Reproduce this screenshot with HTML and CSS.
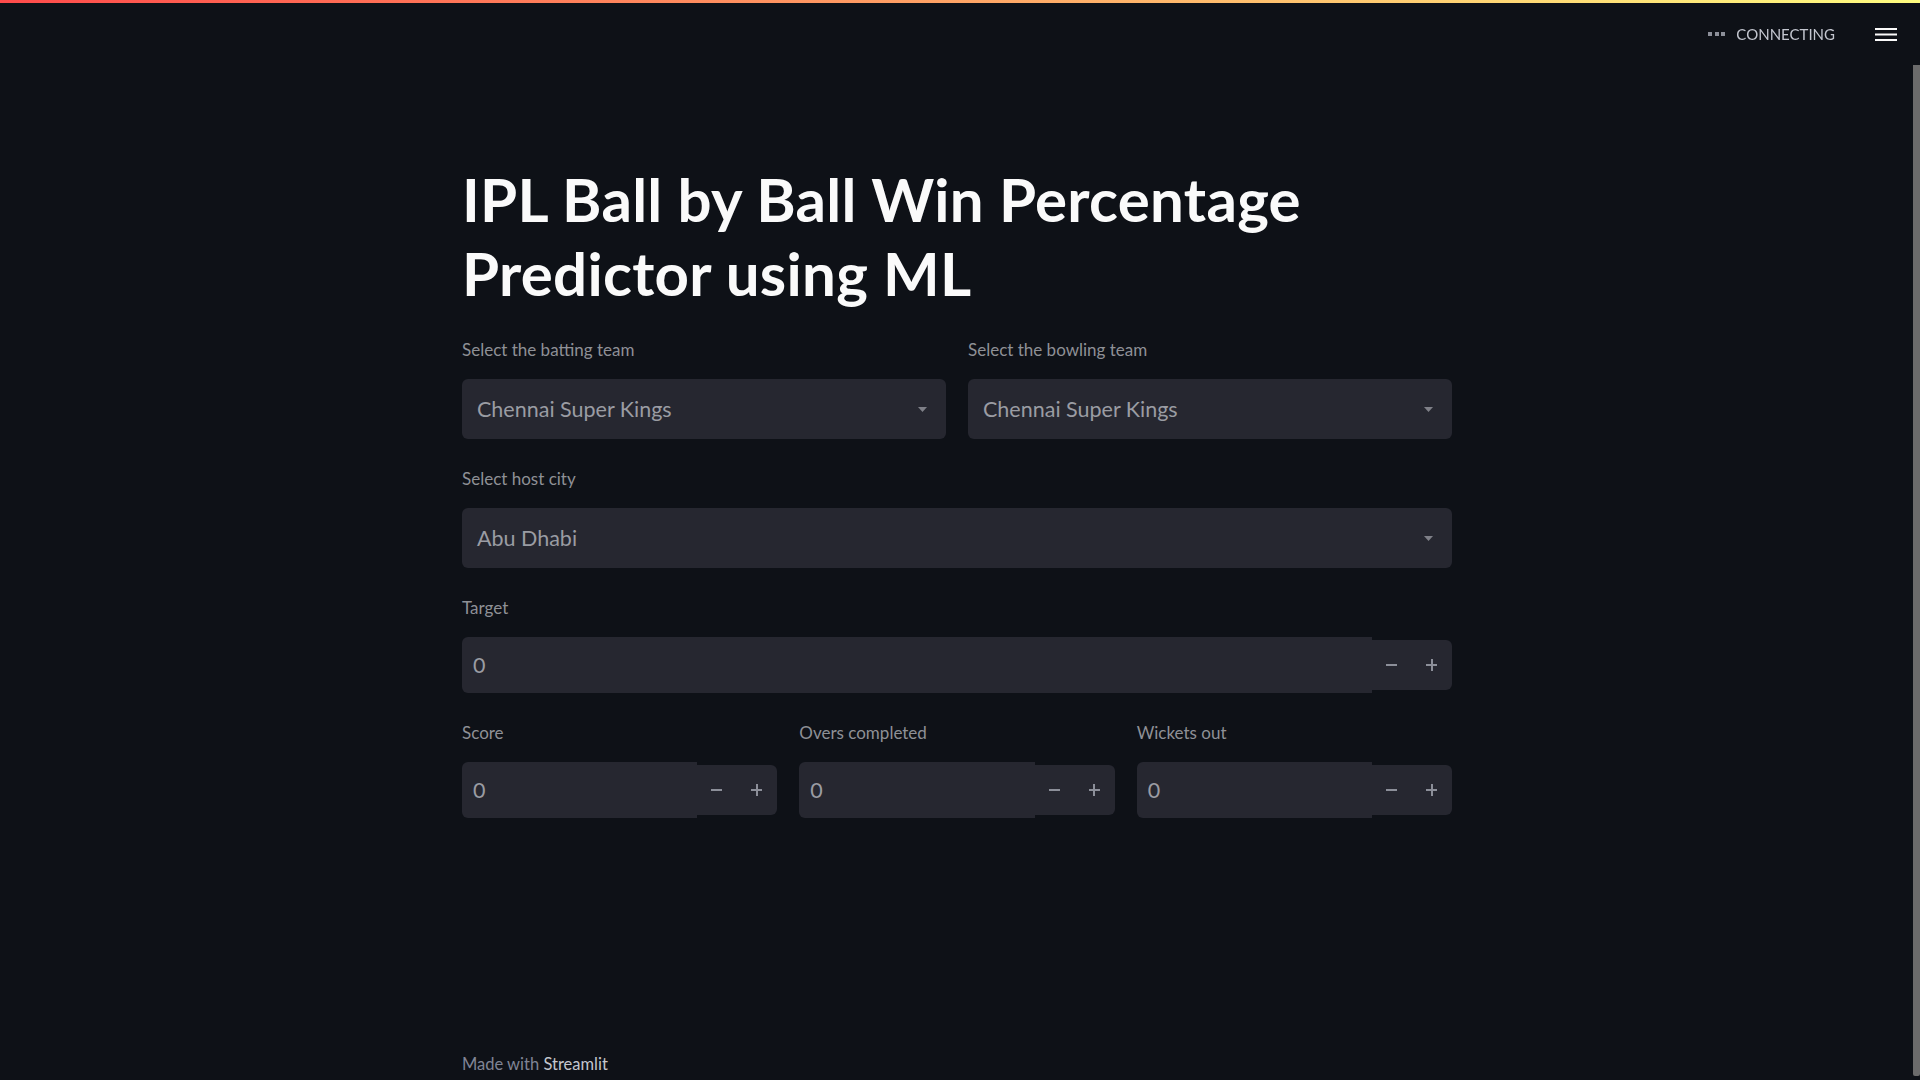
FILE: index.html
```html
<!DOCTYPE html>
<html lang="en">
<head>
    <meta charset="UTF-8">
    <title>IPL Win Predictor</title>
    <link rel="stylesheet" href="styles.css">
</head>
<body>
    <div class="decoration"></div>
    <header class="app-header">
        <span class="status">
            <span class="dots"><i></i><i></i><i></i></span>
            CONNECTING
        </span>
        <span class="menu">
            <svg width="22" height="13" viewBox="0 0 22 13"><rect y="0" width="22" height="2"/><rect y="5.5" width="22" height="2"/><rect y="11" width="22" height="2"/></svg>
        </span>
    </header>

    <div class="app-view">
        <main class="block">
            <h1>IPL Ball by Ball Win Percentage Predictor using ML</h1>

            <div class="cols cols-2">
                <div class="field">
                    <label>Select the batting team</label>
                    <div class="select">
                        <span>Chennai Super Kings</span>
                        <svg class="caret" width="9" height="5" viewBox="0 0 9 5"><path d="M0 0h9L4.5 5z"/></svg>
                    </div>
                </div>
                <div class="field">
                    <label>Select the bowling team</label>
                    <div class="select">
                        <span>Chennai Super Kings</span>
                        <svg class="caret" width="9" height="5" viewBox="0 0 9 5"><path d="M0 0h9L4.5 5z"/></svg>
                    </div>
                </div>
            </div>

            <div class="field">
                <label>Select host city</label>
                <div class="select">
                    <span>Abu Dhabi</span>
                    <svg class="caret" width="9" height="5" viewBox="0 0 9 5"><path d="M0 0h9L4.5 5z"/></svg>
                </div>
            </div>

            <div class="field">
                <label>Target</label>
                <div class="number">
                    <div class="number-value">0</div>
                    <div class="steps">
                        <span class="step minus"></span>
                        <span class="step plus"></span>
                    </div>
                </div>
            </div>

            <div class="cols cols-3">
                <div class="field">
                    <label>Score</label>
                    <div class="number">
                        <div class="number-value">0</div>
                        <div class="steps">
                            <span class="step minus"></span>
                            <span class="step plus"></span>
                        </div>
                    </div>
                </div>
                <div class="field">
                    <label>Overs completed</label>
                    <div class="number">
                        <div class="number-value">0</div>
                        <div class="steps">
                            <span class="step minus"></span>
                            <span class="step plus"></span>
                        </div>
                    </div>
                </div>
                <div class="field">
                    <label>Wickets out</label>
                    <div class="number">
                        <div class="number-value">0</div>
                        <div class="steps">
                            <span class="step minus"></span>
                            <span class="step plus"></span>
                        </div>
                    </div>
                </div>
            </div>
        </main>

        <footer class="footer">Made with <span>Streamlit</span></footer>
    </div>

    <div class="scroll-thumb"></div>
</body>
</html>
```

FILE: styles.css
```css
html, body {
    height: 100%;
}
body {
    margin: 0;
    background: #0e1117;
    color: #fafafa;
    font-family: 'Lato', 'Noto Sans', sans-serif;
    overflow: hidden;
}
.decoration {
    position: fixed;
    top: 0;
    left: 0;
    right: 0;
    height: 3px;
    background: linear-gradient(90deg, #ff4b4b, #fffd80);
}
.app-header {
    position: fixed;
    top: 0;
    right: 0;
    left: 0;
    height: 68px;
    display: flex;
    justify-content: flex-end;
    align-items: center;
    gap: 40px;
    padding-right: 23px;
}
.status {
    display: flex;
    align-items: center;
    gap: 11px;
    font-size: 15px;
    color: #c3c6cf;
}
.dots {
    display: flex;
    gap: 2.5px;
}
.dots i {
    width: 4px;
    height: 4px;
    background: #8c8f99;
}
.menu svg {
    display: block;
    fill: #fafafa;
}

.app-view {
    padding-right: 6px;
    height: 100%;
    display: flex;
    flex-direction: column;
}
.block {
    width: 990px;
    margin: 0 auto;
    padding-top: 162px;
    flex: 1;
}
h1 {
    margin: 0 0 30px;
    font-size: 60px;
    font-weight: 700;
    line-height: 74px;
    letter-spacing: 0.3px;
}
.cols {
    display: grid;
    gap: 22px;
}
.cols-2 {
    grid-template-columns: 1fr 1fr;
}
.cols-3 {
    grid-template-columns: 1fr 1fr 1fr;
}
.field {
    margin-bottom: 30px;
}
.field label {
    display: block;
    font-size: 17px;
    line-height: 20px;
    color: #8e9096;
    margin-bottom: 19px;
}
.select {
    height: 60px;
    background: #262730;
    border-radius: 6px;
    display: flex;
    align-items: center;
    justify-content: space-between;
    padding: 0 19px 0 15px;
    font-size: 21.5px;
    color: #9a9ca3;
}
.caret {
    fill: #7f8088;
}
.number {
    display: flex;
    align-items: center;
    height: 56px;
}
.number-value {
    flex: 1;
    height: 100%;
    background: #262730;
    border-radius: 6px 0 0 6px;
    display: flex;
    align-items: center;
    padding-left: 11px;
    font-size: 21.5px;
    color: #9a9ca3;
}
.steps {
    display: flex;
    width: 80px;
    height: 50px;
    background: #262730;
    border-radius: 0 6px 6px 0;
}
.step {
    flex: 1;
    position: relative;
}
.step::before,
.step::after {
    content: "";
    position: absolute;
    left: 14px;
    top: 24px;
    width: 11px;
    height: 2px;
    background: #8c8f99;
}
.minus::after {
    display: none;
}
.plus::after {
    left: 18.5px;
    top: 19px;
    width: 2px;
    height: 12px;
}
.footer {
    width: 990px;
    margin: 0 auto;
    padding-bottom: 4px;
    font-size: 16.5px;
    line-height: 24px;
    color: #808495;
}
.footer span {
    color: #c4c6cd;
}
.scroll-thumb {
    position: fixed;
    right: 0;
    top: 65px;
    width: 7px;
    height: 1011px;
    background: #6b6b6b;
    border-radius: 0 0 2px 2px;
}
```
